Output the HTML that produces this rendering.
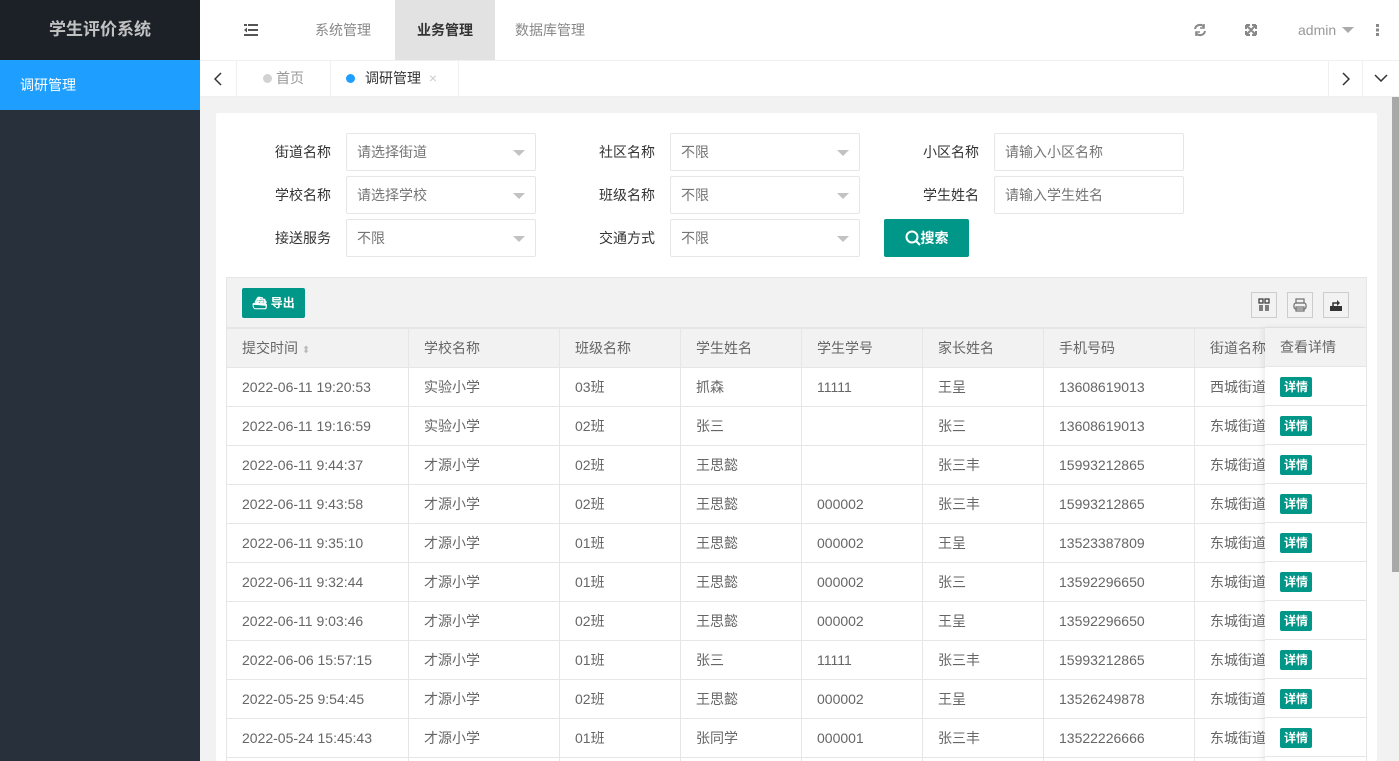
<!DOCTYPE html><html><head><meta charset="utf-8"><style>
*{box-sizing:border-box;margin:0;padding:0}
html{overflow:hidden;height:761px}
body{width:1399px;height:761px;overflow:hidden;font-family:"Liberation Sans","Noto Sans CJK SC",sans-serif;font-size:14px;color:#666;background:#f2f2f2;position:relative}
.abs{position:absolute}
.side{left:0;top:0;width:200px;height:761px;background:#28313b}
.logo{left:0;top:0;width:200px;height:60px;background:#1c2128;color:#c2c2c2;font-size:17px;font-weight:bold;text-align:center;line-height:60px}
.menu{left:0;top:60px;width:200px;height:50px;background:#1e9fff;color:#fff;line-height:50px;padding-left:20px;font-size:14px}
.hdr{left:200px;top:0;width:1199px;height:60px;background:#fff}
.nav{position:absolute;top:0;height:60px;line-height:60px;font-size:14px;color:#888}
.tabs{left:200px;top:60px;width:1199px;height:37px;background:#fff;border-top:1px solid #f0f0f0;border-bottom:1px solid #f0f0f0}
.tb{position:absolute;top:0;height:36px;line-height:35px;border-right:1px solid #f0f0f0;font-size:14px}
.card{left:216px;top:113px;width:1161px;height:648px;background:#fff;border-radius:2px}
.lbl{position:absolute;font-size:14px;color:#333;width:80px;text-align:right;line-height:38px}
.inp{position:absolute;width:190px;height:38px;border:1px solid #e6e6e6;border-radius:2px;line-height:36px;padding-left:10px;color:#757575;font-size:14px;background:#fff}
.sel:after{content:"";position:absolute;right:10px;top:16px;border:6px solid transparent;border-top-color:#c2c2c2;border-bottom:0}
.btn{position:absolute;background:#009688;color:#fff;border-radius:2px;font-weight:bold}
.tbl{left:226px;top:277px;width:1141px;height:484px;border:1px solid #e6e6e6;border-bottom:0;overflow:hidden}
table{border-collapse:collapse;position:absolute;left:-1px;top:50px;table-layout:fixed}
td,th{height:39px;border:1px solid #e6e6e6;padding-left:15px;text-align:left;font-weight:normal;white-space:nowrap;overflow:hidden;color:#666;font-size:14px}
th{background:#f2f2f2}
.fix{position:absolute;left:1038px;top:50px;width:102px;background:#fff;box-shadow:-2px 0 6px rgba(0,0,0,.08)}
.fix div{height:39px;border-bottom:1px solid #e6e6e6;padding-left:15px;line-height:38px}
.tag{display:inline-block;background:#009688;color:#fff;font-size:12px;padding:0 4px;line-height:20px;height:20px;border-radius:2px;font-weight:bold;vertical-align:middle}
.ic{position:absolute;top:14px;width:26px;height:26px;border:1px solid #ccc;background:#f2f2f2}
</style></head><body>
<div class="abs side"></div>
<div class="abs logo">学生评价系统</div>
<div class="abs menu">调研管理</div>
<div class="abs hdr">
<svg class="abs" style="left:44px;top:24px" width="14" height="12"><rect x="4" y="0" width="10" height="2" fill="#555"/><rect x="4" y="5" width="10" height="2" fill="#555"/><rect x="0" y="10" width="14" height="2" fill="#555"/><path d="M0 6L3 3.5V8.5Z" fill="#555"/><rect x="0" y="0" width="3" height="2" fill="#555"/></svg>
<div class="nav" style="left:115px">系统管理</div>
<div class="nav" style="left:195px;width:100px;background:#e2e2e2;text-align:center;color:#333;font-weight:bold">业务管理</div>
<div class="nav" style="left:315px">数据库管理</div>
<svg class="abs" style="left:993px;top:23px" width="14" height="14" fill="none" stroke="#888" stroke-width="2"><path d="M2 6A5 5 0 0 1 11 4M12 8A5 5 0 0 1 3 10"/><path d="M11 1v4h-4M3 13v-4h4" stroke-width="1.6"/></svg>
<svg class="abs" style="left:1045px;top:24px" width="12" height="12" fill="none" stroke="#888" stroke-width="2"><path d="M1 1L11 11M11 1L1 11M1 1h4M1 1v4M11 1h-4M11 1v4M1 11h4M1 11v-4M11 11h-4M11 11v-4"/></svg>
<div class="nav" style="left:1098px;color:#999">admin</div>
<div class="abs" style="left:1142px;top:27px;border:6px solid transparent;border-top-color:#aaa;border-bottom:0"></div>
<div class="abs" style="left:1176px;top:24px;width:3px;height:12px;background:linear-gradient(#888 0 3px,transparent 3px 4.5px,#888 4.5px 7.5px,transparent 7.5px 9px,#888 9px)"></div>
</div>
<div class="abs tabs">
<svg class="abs" style="left:14px;top:11px" width="8" height="14" fill="none" stroke="#333" stroke-width="1.5"><path d="M7 1L1 7L7 13"/></svg>
<div class="tb" style="left:0;width:37px"></div>
<div class="tb" style="left:37px;width:94px;text-align:center;color:#999"><span style="display:inline-block;width:9px;height:9px;border-radius:50%;background:#d2d2d2;margin-right:4px"></span>首页</div>
<div class="tb" style="left:131px;width:128px;padding-left:15px;color:#333"><span style="display:inline-block;width:9px;height:9px;border-radius:50%;background:#1e9fff;margin-right:10px"></span>调研管理 <span style="color:#ccc;margin-left:4px">×</span></div>
<div class="tb" style="left:1128px;width:35px;border-left:1px solid #f0f0f0"></div>
<svg class="abs" style="left:1142px;top:11px" width="8" height="14" fill="none" stroke="#333" stroke-width="1.5"><path d="M1 1L7 7L1 13"/></svg>
<svg class="abs" style="left:1174px;top:13px" width="14" height="8" fill="none" stroke="#333" stroke-width="1.5"><path d="M1 1L7 7L13 1"/></svg>
</div>
<div class="abs" style="left:1392px;top:97px;width:7px;height:664px;background:#f1f1f1"></div>
<div class="abs" style="left:1392px;top:97px;width:7px;height:475px;background:#a8a8a8"></div>
<div class="abs card"></div>
<div class="lbl" style="left:251px;top:133px">街道名称</div><div class="inp sel" style="left:346px;top:133px">请选择街道</div>
<div class="lbl" style="left:575px;top:133px">社区名称</div><div class="inp sel" style="left:670px;top:133px">不限</div>
<div class="lbl" style="left:899px;top:133px">小区名称</div><div class="inp" style="left:994px;top:133px">请输入小区名称</div>
<div class="lbl" style="left:251px;top:176px">学校名称</div><div class="inp sel" style="left:346px;top:176px">请选择学校</div>
<div class="lbl" style="left:575px;top:176px">班级名称</div><div class="inp sel" style="left:670px;top:176px">不限</div>
<div class="lbl" style="left:899px;top:176px">学生姓名</div><div class="inp" style="left:994px;top:176px">请输入学生姓名</div>
<div class="lbl" style="left:251px;top:219px">接送服务</div><div class="inp sel" style="left:346px;top:219px">不限</div>
<div class="lbl" style="left:575px;top:219px">交通方式</div><div class="inp sel" style="left:670px;top:219px">不限</div>
<div class="btn" style="left:884px;top:219px;width:85px;height:38px;line-height:38px;text-align:center;font-size:14px"><svg width="16" height="16" style="vertical-align:-3px" fill="none" stroke="#fff" stroke-width="2"><circle cx="7" cy="7" r="5.5"/><path d="M11 11l4 4"/></svg>搜索</div>
<div class="abs tbl">
<div class="abs" style="left:0;top:0;width:1141px;height:50px;background:#f2f2f2;border-bottom:1px solid #e6e6e6"></div>
<div class="btn" style="left:15px;top:10px;width:63px;height:30px;line-height:30px;text-align:center;font-size:12px">⛴ 导出</div>
<div class="ic" style="left:1024px"><svg width="24" height="24" fill="none" stroke="#333" stroke-width="1.2"><rect x="7" y="6" width="4" height="4"/><rect x="13" y="6" width="4" height="4"/><path d="M8 12v6M10 12v6M14 12v6M16 12v6"/></svg></div>
<div class="ic" style="left:1060px"><svg width="24" height="24" fill="none" stroke="#777" stroke-width="1.3"><rect x="6" y="10" width="12" height="6" rx="2"/><rect x="8" y="6" width="8" height="4"/><rect x="8" y="14" width="8" height="4"/></svg></div>
<div class="ic" style="left:1096px"><svg width="24" height="24"><path d="M6 13h12v5H6z" fill="#333"/><path d="M9 13v-3h5" fill="none" stroke="#333" stroke-width="1.5"/><path d="M13 7l3 3-3 3z" fill="#333"/></svg></div>
<table>
<colgroup><col style="width:182px"><col style="width:151px"><col style="width:121px"><col style="width:121px"><col style="width:121px"><col style="width:121px"><col style="width:151px"><col style="width:120px"></colgroup>
<tr><th>提交时间 <span style="color:#bbb;font-size:10px">⬍</span></th><th>学校名称</th><th>班级名称</th><th>学生姓名</th><th>学生学号</th><th>家长姓名</th><th>手机号码</th><th>街道名称</th></tr>
<tr><td>2022-06-11 19:20:53</td><td>实验小学</td><td>03班</td><td>抓森</td><td>11111</td><td>王呈</td><td>13608619013</td><td>西城街道</td></tr>
<tr><td>2022-06-11 19:16:59</td><td>实验小学</td><td>02班</td><td>张三</td><td></td><td>张三</td><td>13608619013</td><td>东城街道</td></tr>
<tr><td>2022-06-11 9:44:37</td><td>才源小学</td><td>02班</td><td>王思懿</td><td></td><td>张三丰</td><td>15993212865</td><td>东城街道</td></tr>
<tr><td>2022-06-11 9:43:58</td><td>才源小学</td><td>02班</td><td>王思懿</td><td>000002</td><td>张三丰</td><td>15993212865</td><td>东城街道</td></tr>
<tr><td>2022-06-11 9:35:10</td><td>才源小学</td><td>01班</td><td>王思懿</td><td>000002</td><td>王呈</td><td>13523387809</td><td>东城街道</td></tr>
<tr><td>2022-06-11 9:32:44</td><td>才源小学</td><td>01班</td><td>王思懿</td><td>000002</td><td>张三</td><td>13592296650</td><td>东城街道</td></tr>
<tr><td>2022-06-11 9:03:46</td><td>才源小学</td><td>02班</td><td>王思懿</td><td>000002</td><td>王呈</td><td>13592296650</td><td>东城街道</td></tr>
<tr><td>2022-06-06 15:57:15</td><td>才源小学</td><td>01班</td><td>张三</td><td>11111</td><td>张三丰</td><td>15993212865</td><td>东城街道</td></tr>
<tr><td>2022-05-25 9:54:45</td><td>才源小学</td><td>02班</td><td>王思懿</td><td>000002</td><td>王呈</td><td>13526249878</td><td>东城街道</td></tr>
<tr><td>2022-05-24 15:45:43</td><td>才源小学</td><td>01班</td><td>张同学</td><td>000001</td><td>张三丰</td><td>13522226666</td><td>东城街道</td></tr>
<tr><td></td><td></td><td></td><td></td><td></td><td></td><td></td><td></td></tr>
</table>
<div class="fix">
<div style="background:#f2f2f2">查看详情</div>
<div><span class="tag">详情</span></div><div><span class="tag">详情</span></div><div><span class="tag">详情</span></div><div><span class="tag">详情</span></div><div><span class="tag">详情</span></div><div><span class="tag">详情</span></div><div><span class="tag">详情</span></div><div><span class="tag">详情</span></div><div><span class="tag">详情</span></div><div><span class="tag">详情</span></div><div></div>
</div>
</div>
</body></html>
